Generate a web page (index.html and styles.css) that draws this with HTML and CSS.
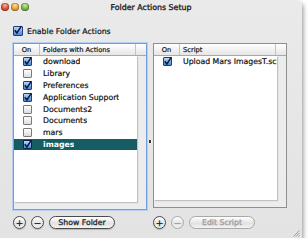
FILE: index.html
```html
<!DOCTYPE html>
<html lang="en">
<head>
  <meta charset="UTF-8">
  <title>Folder Actions Setup</title>
  <link rel="stylesheet" href="styles.css">
</head>
<body>

  <div class="window">
    <!-- Title bar -->
    <div class="titlebar">
      <div class="lights">
        <span class="light red"></span>
        <span class="light orange"></span>
        <span class="light green"></span>
      </div>
      <div class="title">Folder Actions Setup</div>
      <div></div>
    </div>

    <label class="enable">
      <span class="cb on"><svg viewBox="0 0 9 9"><path d="M1.8 4.2 L3.9 6.9 L8.4 0.2" /></svg></span>
      Enable Folder Actions
    </label>

    <!-- Two tables side by side -->
    <div class="panes">
      <div class="table focused">
        <div class="thead">
          <div class="th col-on">On</div>
          <div class="th col-name">Folders with Actions</div>
          <div class="th col-end"></div>
        </div>
        <div class="tbody">
          <div class="rows">
            <div class="row"><span class="cb on"><svg viewBox="0 0 9 9"><path d="M1.8 4.2 L3.9 6.9 L8.4 0.2" /></svg></span><span class="name">download</span></div>
            <div class="row"><span class="cb"></span><span class="name">Library</span></div>
            <div class="row"><span class="cb on"><svg viewBox="0 0 9 9"><path d="M1.8 4.2 L3.9 6.9 L8.4 0.2" /></svg></span><span class="name">Preferences</span></div>
            <div class="row"><span class="cb on"><svg viewBox="0 0 9 9"><path d="M1.8 4.2 L3.9 6.9 L8.4 0.2" /></svg></span><span class="name">Application Support</span></div>
            <div class="row"><span class="cb"></span><span class="name">Documents2</span></div>
            <div class="row"><span class="cb"></span><span class="name">Documents</span></div>
            <div class="row"><span class="cb"></span><span class="name">mars</span></div>
            <div class="row selected"><span class="cb on"><svg viewBox="0 0 9 9"><path d="M1.8 4.2 L3.9 6.9 L8.4 0.2" /></svg></span><span class="name">images</span></div>
          </div>
        </div>
      </div>

      <div class="splitter"><span class="grip"></span></div>

      <div class="table">
        <div class="thead">
          <div class="th col-on">On</div>
          <div class="th col-name">Script</div>
          <div class="th col-end"></div>
        </div>
        <div class="tbody">
          <div class="rows">
            <div class="row"><span class="cb on"><svg viewBox="0 0 9 9"><path d="M1.8 4.2 L3.9 6.9 L8.4 0.2" /></svg></span><span class="name">Upload Mars ImagesT.scpt</span></div>
          </div>
        </div>
      </div>
    </div>

    <!-- Bottom buttons -->
    <div class="actions">
      <div class="group">
        <button class="round">+</button>
        <button class="round">&minus;</button>
        <button class="pill">Show Folder</button>
      </div>
      <div></div>
      <div class="group">
        <button class="round">+</button>
        <button class="round" disabled>&minus;</button>
        <button class="pill" disabled>Edit Script</button>
      </div>
    </div>

    <svg class="resize" viewBox="0 0 8 8">
      <path d="M7.5 1.5 L1.5 7.5 M7.5 4 L4 7.5 M7.5 6.5 L6.5 7.5" />
    </svg>
  </div>

</body>
</html>
```

FILE: styles.css
```css
/* Page */
body {
  margin: 0;
  background-color: #fff;
  font-family: "DejaVu Sans", sans-serif;
  color: #111;
}

/* Window frame */
.window {
  position: relative;
  width: 302px;
  height: 238px;
  background: linear-gradient(#eaeaea, #e3e3e3);
  border-radius: 5px 5px 0 0;
  box-shadow: 1px 3px 5px rgba(0, 0, 0, 0.45);
  display: flex;
  flex-direction: column;
  -webkit-text-stroke: 0.2px currentColor;
}

.titlebar {
  height: 12px;
  padding: 1px 1px 0;
  display: grid;
  grid-template-columns: 1fr auto 1fr;
  align-items: center;
}

.lights {
  display: flex;
  gap: 2px;
}

.light {
  width: 8px;
  height: 8px;
  border-radius: 50%;
  box-shadow: inset 0 0 0 0.5px rgba(0, 0, 0, 0.35);
}

.red { background: radial-gradient(circle at 50% 30%, #f6b3a0, #cf4a30 55%, #8e2816); }
.orange { background: radial-gradient(circle at 50% 30%, #fbe0a0, #dc9b2a 55%, #9a6010); }
.green { background: radial-gradient(circle at 50% 30%, #cdeaa4, #72ad40 55%, #3e6e1d); }

.title {
  font-size: 7.9px;
  color: #1a1a1a;
  padding-top: 1px;
  -webkit-text-stroke: 0.3px currentColor;
}

/* Enable checkbox */
.enable {
  margin: 13px 0 7px 13px;
  height: 10px;
  display: flex;
  align-items: center;
  gap: 4px;
  font-size: 7.75px;
}

/* Checkboxes */
.cb {
  display: block;
  box-sizing: border-box;
  width: 9px;
  height: 9px;
  border: 1px solid #7a7a7a;
  border-radius: 1px;
  background: linear-gradient(#ffffff, #dcdcdc);
}

.cb.on {
  border-color: #1f3d7a;
  background: linear-gradient(#b9d6f7, #4a87d9);
}

.cb svg {
  display: block;
  width: 9px;
  height: 9px;
  margin: -1px;
  overflow: visible;
}

.cb svg path {
  fill: none;
  stroke: #0b1740;
  stroke-width: 1.5;
}

.enable .cb {
  width: 10px;
  height: 10px;
}

/* Tables */
.panes {
  margin-left: 13px;
  height: 167px;
  display: grid;
  grid-template-columns: 134px 6px 134px;
}

.table {
  box-sizing: border-box;
  border: 1px solid #8f8f8f;
  background-color: #ececec;
  display: flex;
  flex-direction: column;
  height: 165px;
}

.table.focused {
  height: 167px;
  border-color: #6f9fdb;
  box-shadow: 0 0 0 1px #b5cff0;
}

.thead {
  height: 11px;
  display: flex;
  background: linear-gradient(#ffffff, #e6e6e6);
  border-bottom: 1px solid #a9a9a9;
  font-size: 6.7px;
}

.th {
  display: flex;
  align-items: center;
  border-right: 1px solid #c4c4c4;
  box-sizing: border-box;
}

.col-on {
  width: 26px;
  justify-content: center;
}

.col-name {
  flex: 1;
  padding-left: 3px;
}

.col-end {
  width: 10px;
  border-right: none;
}

.tbody {
  flex: 1;
  padding: 0 9px 7px 0;
}

.rows {
  height: 100%;
  background-color: #fff;
  box-shadow: 1px 1px 1px rgba(0, 0, 0, 0.18);
  overflow: hidden;
}

.row {
  height: 11.8px;
  display: grid;
  grid-template-columns: 26px 1fr;
  align-items: center;
  justify-items: start;
  font-size: 7.75px;
  white-space: nowrap;
}

.row .cb {
  justify-self: center;
}

.row .name {
  padding-left: 3px;
  overflow: hidden;
}

.row.selected {
  background-color: #165c63;
  color: #fff;
  font-weight: bold;
  -webkit-text-stroke: 0;
}

.row.selected .cb.on {
  border-color: #0c2247;
}

/* Splitter between the tables */
.splitter {
  display: flex;
  justify-content: center;
  padding-top: 97px;
}

.grip {
  width: 2px;
  height: 3px;
  background-color: #333;
  box-shadow: 1px 0 0 #fff;
}

/* Buttons under the tables */
.actions {
  margin: 6px 0 0 13px;
  display: grid;
  grid-template-columns: 134px 6px 134px;
}

.group {
  display: flex;
  gap: 5px;
  align-items: center;
}

button {
  font-family: "DejaVu Sans", sans-serif;
  color: #1a1a1a;
  margin: 0;
  padding: 0;
  box-sizing: border-box;
  border: 1px solid #4a4a4a;
  background: linear-gradient(#ffffff, #e2e2e2 60%, #f4f4f4);
  box-shadow: 0 1px 1px rgba(0, 0, 0, 0.2);
  -webkit-text-stroke: 0.25px currentColor;
}

.round {
  width: 13px;
  height: 13px;
  border-radius: 50%;
  font-size: 9px;
  line-height: 10px;
}

.pill {
  width: 66px;
  height: 13px;
  border-radius: 7px;
  font-size: 7.75px;
  line-height: 10px;
}

button:disabled {
  color: #9a9a9a;
  border-color: #a8a8a8;
  box-shadow: none;
}

/* Resize handle in the corner */
.resize {
  position: absolute;
  right: 2px;
  bottom: 1px;
  width: 8px;
  height: 8px;
}

.resize path {
  stroke: #8a8a8a;
  stroke-width: 0.8;
}
```
